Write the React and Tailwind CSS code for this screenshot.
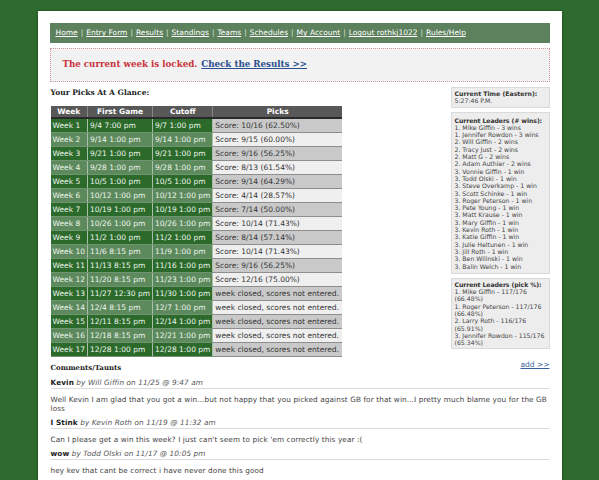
import React from 'react';

const weeks = [
  ['Week 1', '9/4 7:00 pm', '9/7 1:00 pm', 'Score: 10/16 (62.50%)'],
  ['Week 2', '9/14 1:00 pm', '9/14 1:00 pm', 'Score: 9/15 (60.00%)'],
  ['Week 3', '9/21 1:00 pm', '9/21 1:00 pm', 'Score: 9/16 (56.25%)'],
  ['Week 4', '9/28 1:00 pm', '9/28 1:00 pm', 'Score: 8/13 (61.54%)'],
  ['Week 5', '10/5 1:00 pm', '10/5 1:00 pm', 'Score: 9/14 (64.29%)'],
  ['Week 6', '10/12 1:00 pm', '10/12 1:00 pm', 'Score: 4/14 (28.57%)'],
  ['Week 7', '10/19 1:00 pm', '10/19 1:00 pm', 'Score: 7/14 (50.00%)'],
  ['Week 8', '10/26 1:00 pm', '10/26 1:00 pm', 'Score: 10/14 (71.43%)'],
  ['Week 9', '11/2 1:00 pm', '11/2 1:00 pm', 'Score: 8/14 (57.14%)'],
  ['Week 10', '11/6 8:15 pm', '11/9 1:00 pm', 'Score: 10/14 (71.43%)'],
  ['Week 11', '11/13 8:15 pm', '11/16 1:00 pm', 'Score: 9/16 (56.25%)'],
  ['Week 12', '11/20 8:15 pm', '11/23 1:00 pm', 'Score: 12/16 (75.00%)'],
  ['Week 13', '11/27 12:30 pm', '11/30 1:00 pm', 'week closed, scores not entered.'],
  ['Week 14', '12/4 8:15 pm', '12/7 1:00 pm', 'week closed, scores not entered.'],
  ['Week 15', '12/11 8:15 pm', '12/14 1:00 pm', 'week closed, scores not entered.'],
  ['Week 16', '12/18 8:15 pm', '12/21 1:00 pm', 'week closed, scores not entered.'],
  ['Week 17', '12/28 1:00 pm', '12/28 1:00 pm', 'week closed, scores not entered.'],
];

const leaders = [
  '1. Mike Giffin - 3 wins',
  '1. Jennifer Rowdon - 3 wins',
  '2. Will Giffin - 2 wins',
  '2. Tracy Just - 2 wins',
  '2. Matt G - 2 wins',
  '2. Adam Authier - 2 wins',
  '3. Vonnie Giffin - 1 win',
  '3. Todd Olski - 1 win',
  '3. Steve Overkamp - 1 win',
  '3. Scott Schinke - 1 win',
  '3. Roger Peterson - 1 win',
  '3. Pete Young - 1 win',
  '3. Matt Krause - 1 win',
  '3. Mary Giffin - 1 win',
  '3. Kevin Roth - 1 win',
  '3. Katie Giffin - 1 win',
  '3. Julie Heltunen - 1 win',
  '3. Jill Roth - 1 win',
  '3. Ben Wilinski - 1 win',
  '3. Balin Welch - 1 win',
];

const pickPct = [
  ['1. Mike Giffin - 117/176', '(66.48%)'],
  ['1. Roger Peterson - 117/176', '(66.48%)'],
  ['2. Larry Roth - 116/176', '(65.91%)'],
  ['3. Jennifer Rowdon - 115/176', '(65.34%)'],
];

const comments = [
  { title: 'Kevin', by: 'by Will Giffin on 11/25 @ 9:47 am', body: 'Well Kevin I am glad that you got a win...but not happy that you picked against GB for that win...I pretty much blame you for the GB loss' },
  { title: 'I Stink', by: 'by Kevin Roth on 11/19 @ 11:32 am', body: "Can I please get a win this week? I just can't seem to pick 'em correctly this year :(" },
  { title: 'wow', by: 'by Todd Olski on 11/17 @ 10:05 pm', body: 'hey kev that cant be correct i have never done this good' },
];

const navLinks = ['Home', 'Entry Form', 'Results', 'Standings', 'Teams', 'Schedules', 'My Account', 'Logout rothkj1022', 'Rules/Help'];

export default function App() {
  return (
    <div className="min-h-screen bg-[#2e6a2e] pt-[11px] font-['DejaVu_Sans',Verdana,sans-serif]">
      <div className="w-[524px] mx-auto bg-white px-[12px] pt-[12px] pb-[20px] shadow-[0_0_2px_rgba(0,0,0,0.5)]">
        {/* nav */}
        <div className="h-[20px] bg-[#5c815c] flex items-center px-[6px] text-[7.5px] text-white">
          {navLinks.map((l, i) => (
            <React.Fragment key={l}>
              {i > 0 && <span className="mx-[3px] text-[#d8e4d8]">|</span>}
              <span className="underline">{l}</span>
            </React.Fragment>
          ))}
        </div>

        {/* locked */}
        <div className="mt-[5px] h-[34px] bg-[#f2f2f2] border border-dotted border-[#d49a9a] flex items-center pl-[12px] font-['DejaVu_Serif',Georgia,serif] text-[8.7px] font-bold">
          <span className="text-[#c8323a]">The current week is locked.</span>
          <span className="ml-[4px] text-[#2a4f8f] underline">Check the Results &gt;&gt;</span>
        </div>

        <div className="mt-[5px] flex justify-between">
          {/* left */}
          <div className="pl-[1px]">
            <div className="h-[12px] leading-[12px] font-['DejaVu_Serif',Georgia,serif] font-bold text-[7.5px] text-[#222]">Your Picks At A Glance:</div>
            <table className="mt-[7px] border-collapse text-[7.5px]">
              <thead>
                <tr className="bg-[#585858] text-white font-bold h-[12px]">
                  <th className="w-[37px] border-r border-[#888] border-b-2 border-b-[#2a2a2a] font-bold">Week</th>
                  <th className="w-[64px] border-r border-[#888] border-b-2 border-b-[#2a2a2a] font-bold">First Game</th>
                  <th className="w-[58px] border-r border-[#888] border-b-2 border-b-[#2a2a2a] font-bold">Cutoff</th>
                  <th className="w-[129px] border-b-2 border-b-[#2a2a2a] font-bold">Picks</th>
                </tr>
              </thead>
              <tbody>
                {weeks.map((w, i) => {
                  const dark = i % 2 === 0;
                  const g = dark ? 'bg-[#2b6a2b]' : 'bg-[#5d8a5d]';
                  const p = dark ? 'bg-[#c9c9c9]' : 'bg-[#efefef]';
                  return (
                    <tr key={w[0]} className="h-[14px] leading-[13px]">
                      <td className={`${g} text-[#eef5ee] px-[2px] whitespace-nowrap border-r border-[#a7c0a7] border-b border-b-[#6f946f]`}>{w[0]}</td>
                      <td className={`${g} text-[#eef5ee] px-[2px] whitespace-nowrap border-r border-[#a7c0a7] border-b border-b-[#6f946f]`}>{w[1]}</td>
                      <td className={`${g} text-[#eef5ee] px-[2px] whitespace-nowrap border-r border-[#a7c0a7] border-b border-b-[#6f946f]`}>{w[2]}</td>
                      <td className={`${p} text-[#333] px-[2px] whitespace-nowrap border-b border-b-[#8e8e8e]`}>{w[3]}</td>
                    </tr>
                  );
                })}
              </tbody>
            </table>
          </div>

          {/* sidebar */}
          <div className="w-[99px] text-[6.2px] leading-[7.3px] text-[#444]">
            <div className="bg-[#ededed] border border-[#dadada] px-[3px] py-[2px]">
              <div className="font-bold text-[#333] whitespace-nowrap">Current Time (Eastern):</div>
              <div>5:27:46 P.M.</div>
            </div>
            <div className="mt-[4px] bg-[#ededed] border border-[#dadada] px-[3px] pt-[4px] pb-[3px]">
              <div className="font-bold text-[#333] whitespace-nowrap tracking-[-0.1px]">Current Leaders (# wins):</div>
              {leaders.map((l) => (
                <div key={l} className="whitespace-nowrap">{l}</div>
              ))}
            </div>
            <div className="mt-[4px] bg-[#ededed] border border-[#dadada] px-[3px] pt-[2px] pb-[1px]">
              <div className="font-bold text-[#333] whitespace-nowrap tracking-[-0.1px]">Current Leaders (pick %):</div>
              {pickPct.map((l) => (
                <React.Fragment key={l[0]}>
                  <div className="whitespace-nowrap">{l[0]}</div>
                  <div>{l[1]}</div>
                </React.Fragment>
              ))}
            </div>
          </div>
        </div>

        {/* comments */}
        <div className="mt-[2px] flex justify-between items-start pl-[1px]">
          <div className="mt-[3px] h-[12px] leading-[12px] font-['DejaVu_Serif',Georgia,serif] font-bold text-[7px] text-[#222]">Comments/Taunts</div>
          <div className="text-[7.5px] leading-[12px] text-[#3a5f9f] underline">add &gt;&gt;</div>
        </div>
        <div className="pl-[1px] text-[7.3px] tracking-[0.1px] text-[#444]">
          {comments.map((c) => (
            <div key={c.title} className="mt-[4px]">
              <div className="h-[11px] leading-[10px] border-b border-[#dcdcdc]">
                <span className="font-bold text-[#222]">{c.title}</span>{' '}
                <span className="italic text-[#555]">{c.by}</span>
              </div>
              <div className="mt-[6px] mb-[5px] leading-[9px]">{c.body}</div>
            </div>
          ))}
        </div>
      </div>
    </div>
  );
}
